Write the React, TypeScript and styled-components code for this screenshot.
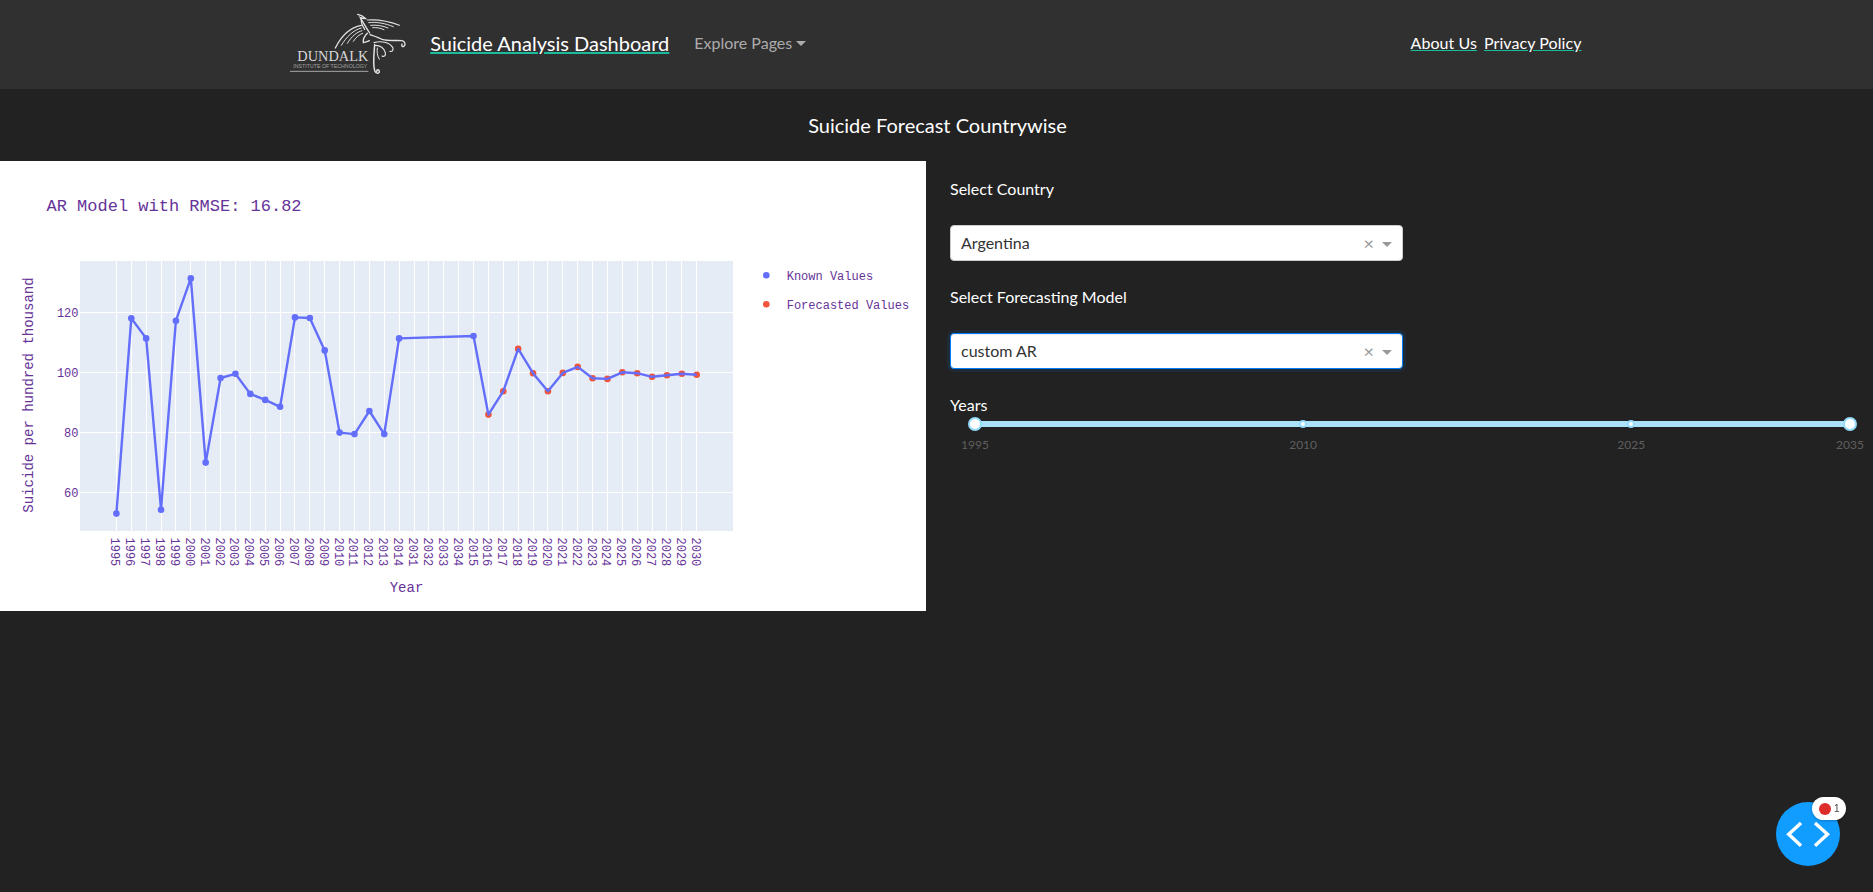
import styled, { createGlobalStyle } from "styled-components";

const GlobalStyle = createGlobalStyle`
  html, body {
    margin: 0;
    padding: 0;
    background: #222222;
    color: #ffffff;
    font-family: Lato, "Open Sans", sans-serif;
    font-size: 16px;
    overflow: hidden;
  }
  * { box-sizing: border-box; }
`;

const PLOT = { left: 80, right: 733, top: 100, bottom: 370 };
const firstTick = 116.4;
const tickStep = 14.88;
const yOf = (v: number) => 151.3 + (120 - v) * 3;
const gridY = (v: number) => yOf(v) + 0.6;
const xOf = (i: number) => firstTick + i * tickStep;

const years = [
  ...Array.from({ length: 20 }, (_, i) => 1995 + i),
  2031, 2032, 2033, 2034,
  ...Array.from({ length: 16 }, (_, i) => 2015 + i),
];

const known: [number, number][] = [
  [0, 52.9], [1, 118], [2, 111.3], [3, 54.2], [4, 117.2], [5, 131.3], [6, 69.9],
  [7, 98.1], [8, 99.5], [9, 92.8], [10, 90.8], [11, 88.5], [12, 118.3], [13, 118.1],
  [14, 107.3], [15, 79.9], [16, 79.4], [17, 87.1], [18, 79.4], [19, 111.3], [24, 112.1],
];

const forecast: [number, number][] = [
  [25, 85.9], [26, 93.7], [27, 107.8], [28, 99.7], [29, 93.7], [30, 99.8], [31, 101.8],
  [32, 98], [33, 97.8], [34, 100], [35, 99.7], [36, 98.5], [37, 99], [38, 99.5], [39, 99.2],
];

const linePoints = [...known, ...forecast]
  .map(([i, v]) => `${xOf(i).toFixed(1)},${yOf(v).toFixed(1)}`)
  .join(" ");

const Logo = () => (
  <LogoSvg viewBox="30 20 350 190">
    <g fill="none" stroke="#e2e2e2" strokeLinecap="round">
      <path strokeWidth="4" d="M233 27c10 2 18 7 24 13-6 0-12-1-16-3 6 10 16 28 28 46" />
      <path strokeWidth="4" d="M244 38c-2 10 2 22 10 34" />
      <path strokeWidth="3.5" d="M262 44c30-2 66 4 96 16" />
      <path strokeWidth="3" d="M266 52c24-3 50 2 74 12" />
      <path strokeWidth="3" d="M272 60c18-2 36 1 52 8" />
      <path strokeWidth="3" d="M278 67c12-1 24 1 34 6" />
      <path strokeWidth="4" d="M244 60c-34 6-60 32-78 68" />
      <path strokeWidth="3" d="M244 68c-24 6-44 26-60 52" />
      <path strokeWidth="3" d="M246 76c-16 4-32 18-44 38" />
      <path strokeWidth="3" d="M248 84c-10 3-20 12-28 24" />
      <path strokeWidth="4" d="M262 84c-8 8-14 18-12 28 6-2 12-2 18-6" />
      <path strokeWidth="4" d="M270 88c12 4 26 8 36 14 22 6 44 2 60 4 10 2 12 14 4 18-4 0-6-4-4-8" />
      <path strokeWidth="3.5" d="M282 112c20-6 46-2 56 14 4 8-2 14-8 12" />
      <path strokeWidth="3.5" d="M286 120c14 0 26 8 30 22 2 8-4 14-10 10" />
      <path strokeWidth="4.5" d="M284 118c-2 30-6 56 0 78 4 10 14 10 14 2-1-6-8-6-8 0" />
      <path strokeWidth="3" d="M292 128c-2 10 0 26 6 34" />
    </g>
    <LogoTitle x="52" y="167" textLength="213" lengthAdjust="spacingAndGlyphs">DUNDALK</LogoTitle>
    <LogoSub x="40" y="189" textLength="222" lengthAdjust="spacingAndGlyphs">INSTITUTE OF TECHNOLOGY</LogoSub>
    <line x1="30" y1="198" x2="265" y2="198" stroke="#a8a8a8" strokeWidth="3" />
  </LogoSvg>
);

const Chart = () => (
  <ChartSvg viewBox="0 0 926 450">
    <rect
      x={PLOT.left}
      y={PLOT.top}
      width={PLOT.right - PLOT.left}
      height={PLOT.bottom - PLOT.top}
      fill="#e5ecf6"
    />
    <g stroke="#ffffff" strokeWidth="1" shapeRendering="crispEdges">
      {years.map((_, i) => (
        <line key={i} x1={xOf(i)} x2={xOf(i)} y1={PLOT.top} y2={PLOT.bottom} />
      ))}
      {[120, 100, 80, 60].map((v) => (
        <line key={v} x1={PLOT.left} x2={PLOT.right} y1={gridY(v)} y2={gridY(v)} />
      ))}
    </g>

    {forecast.map(([i, v]) => (
      <circle key={i} cx={xOf(i)} cy={yOf(v)} r="3.3" fill="#ef553b" />
    ))}
    <polyline points={linePoints} fill="none" stroke="#636efa" strokeWidth="2.4" strokeLinejoin="round" />
    {known.map(([i, v]) => (
      <circle key={i} cx={xOf(i)} cy={yOf(v)} r="3.3" fill="#636efa" />
    ))}

    <ChartTitle x="46.5" y="49.5">AR Model with RMSE: 16.82</ChartTitle>

    {[120, 100, 80, 60].map((v) => (
      <TickText key={v} x="78.5" y={gridY(v) + 4} textAnchor="end">
        {v}
      </TickText>
    ))}
    {years.map((year, i) => (
      <TickText key={i} transform={`translate(${xOf(i) - 5},376.5) rotate(90)`}>
        {year}
      </TickText>
    ))}

    <AxisTitle transform="translate(33,234) rotate(-90)" textAnchor="middle">
      Suicide per hundred thousand
    </AxisTitle>
    <AxisTitle x="406.5" y="430.5" textAnchor="middle">
      Year
    </AxisTitle>

    <circle cx="766.3" cy="114.3" r="3.3" fill="#636efa" />
    <TickText x="786.7" y="118.5">Known Values</TickText>
    <circle cx="766.3" cy="143.3" r="3.3" fill="#ef553b" />
    <TickText x="786.7" y="147.5">Forecasted Values</TickText>
  </ChartSvg>
);

const Dropdown = ({ value, focused }: { value: string; focused?: boolean }) => (
  <SelectBox $focused={focused}>
    <SelectValue>{value}</SelectValue>
    <ClearMark>×</ClearMark>
    <SelectArrow />
  </SelectBox>
);

const sliderMarks = [1995, 2010, 2025, 2035];
const markPercent = (year: number) => ((year - 1995) / 40) * 100;

const App = () => {
  return (
    <Page>
      <GlobalStyle />
      <NavBar>
        <NavInner>
          <Logo />
          <Brand href="#">Suicide Analysis Dashboard</Brand>
          <ExploreToggle>Explore Pages</ExploreToggle>
          <NavLinks>
            <SmallLink href="#">About Us</SmallLink>
            <SmallLink href="#">Privacy Policy</SmallLink>
          </NavLinks>
        </NavInner>
      </NavBar>

      <PageTitle>Suicide Forecast Countrywise</PageTitle>

      <Columns>
        <ChartPanel>
          <Chart />
        </ChartPanel>
        <Controls>
          <FieldLabel>Select Country</FieldLabel>
          <Dropdown value="Argentina" />
          <FieldLabel>Select Forecasting Model</FieldLabel>
          <Dropdown value="custom AR" focused />
          <SliderLabel>Years</SliderLabel>
          <Slider>
            <SliderRail>
              {sliderMarks.map((year) => (
                <SliderMark key={year} $left={markPercent(year)} $end={year === 1995 || year === 2035}>
                  <MarkLabel $end={year === 1995 || year === 2035}>{year}</MarkLabel>
                </SliderMark>
              ))}
            </SliderRail>
          </Slider>
        </Controls>
      </Columns>

      <DebugButton>
        <svg width="64" height="64" viewBox="0 0 64 64" fill="none" stroke="#fff" strokeWidth="3.4">
          <path d="M25 21 12.7 32.3 25 43.7" />
          <path d="M39 21 51.5 32.3 39 43.7" />
        </svg>
        <DebugBadge>
          <BadgeDot />
          <span>1</span>
        </DebugBadge>
      </DebugButton>
    </Page>
  );
};

export default App;

const Page = styled.div`
  min-height: 100vh;
  background: #222222;
`;

const NavBar = styled.nav`
  height: 89px;
  background: #303030;
`;

const NavInner = styled.div`
  width: 1320px;
  height: 100%;
  margin: 0 auto;
  padding: 0 15px 0 13px;
  display: flex;
  align-items: center;
`;

const LogoSvg = styled.svg`
  width: 116.67px;
  height: 63.33px;
  margin: 0 24px 2px 0;
  flex: none;
`;

const LogoTitle = styled.text`
  font-family: "Liberation Serif", serif;
  font-size: 44px;
  fill: #d8d8d8;
`;

const LogoSub = styled.text`
  font-family: "Liberation Sans", sans-serif;
  font-size: 17px;
  fill: #a0a0a0;
`;

const Brand = styled.a`
  color: #ffffff;
  font-size: 20px;
  line-height: 30px;
  margin: 0 24px 3px 0;
  text-decoration: underline;
  text-decoration-color: #1abc9c;
`;

const ExploreToggle = styled.div`
  color: rgba(255, 255, 255, 0.6);
  line-height: 24px;
  margin-bottom: 3px;
  padding-left: 1px;

  &::after {
    content: "";
    display: inline-block;
    margin-left: 4px;
    vertical-align: 3px;
    border-top: 5px solid;
    border-left: 5px solid transparent;
    border-right: 5px solid transparent;
  }
`;

const NavLinks = styled.div`
  margin-left: auto;
  display: flex;
  gap: 7px;
  margin-bottom: 3px;
`;

const SmallLink = styled.a`
  color: #ffffff;
  font-size: 16px;
  line-height: 24px;
  letter-spacing: 0.07px;
  text-decoration: underline;
  text-decoration-color: #1abc9c;
`;

const PageTitle = styled.h4`
  margin: 0;
  height: 72px;
  padding-left: 2px;
  display: flex;
  align-items: center;
  justify-content: center;
  font-size: 20px;
  font-weight: 400;
  color: #ffffff;
`;

const Columns = styled.div`
  display: flex;
  align-items: flex-start;
`;

const ChartPanel = styled.div`
  width: 926px;
  height: 450px;
  background: #ffffff;
  flex: none;
`;

const ChartSvg = styled.svg`
  display: block;
  width: 926px;
  height: 450px;
`;

const ChartTitle = styled.text`
  font-family: "Liberation Mono", monospace;
  font-size: 17px;
  fill: rebeccapurple;
`;

const TickText = styled.text`
  font-family: "Liberation Mono", monospace;
  font-size: 12px;
  fill: rebeccapurple;
`;

const AxisTitle = styled.text`
  font-family: "Liberation Mono", monospace;
  font-size: 14px;
  fill: rebeccapurple;
`;

const Controls = styled.div`
  flex: 1;
  padding: 16px 23px 0 24px;
`;

const FieldLabel = styled.div`
  line-height: 24px;
  margin-bottom: 24px;
  color: #ffffff;
`;

const SelectBox = styled.div<{ $focused?: boolean }>`
  width: 453px;
  height: 36px;
  margin-bottom: 24px;
  padding: 0 10px 0 10px;
  display: flex;
  align-items: center;
  background: #ffffff;
  border: 1px solid ${({ $focused }) => ($focused ? "#007eff" : "#cccccc")};
  border-radius: 4px;
  box-shadow: ${({ $focused }) =>
    $focused ? "inset 0 1px 1px rgba(0,0,0,.075), 0 0 0 3px rgba(0,126,255,.1)" : "none"};
`;

const SelectValue = styled.span`
  flex: 1;
  margin-bottom: 2px;
  color: #333333;
  font-size: 16px;
`;

const ClearMark = styled.span`
  color: #999999;
  font-size: 18px;
  line-height: 1;
  margin-right: 8px;
`;

const SelectArrow = styled.span`
  width: 0;
  height: 0;
  margin-top: 3px;
  border-top: 5px solid #999999;
  border-left: 5px solid transparent;
  border-right: 5px solid transparent;
`;

const SliderLabel = styled.div`
  line-height: 24px;
  color: #ffffff;
`;

const Slider = styled.div`
  padding: 4px 0 0 25px;
`;

const SliderRail = styled.div`
  position: relative;
  height: 6px;
  background: #abe2fb;
  border-radius: 6px;
`;

const SliderMark = styled.span<{ $left: number; $end: boolean }>`
  position: absolute;
  top: 50%;
  left: ${({ $left }) => $left}%;
  width: ${({ $end }) => ($end ? 14 : 8)}px;
  height: ${({ $end }) => ($end ? 14 : 8)}px;
  transform: translate(-50%, -50%);
  background: #ffffff;
  border: ${({ $end }) => ($end ? 2 : 2.5)}px solid #96dbfa;
  border-radius: 50%;
`;

const MarkLabel = styled.span<{ $end: boolean }>`
  position: absolute;
  top: ${({ $end }) => ($end ? 17.5 : 15)}px;
  left: 50%;
  transform: translateX(-50%);
  font-size: 12px;
  line-height: 15px;
  color: #5f5f5f;
`;

const DebugButton = styled.div`
  position: fixed;
  right: 33px;
  bottom: 26px;
  width: 64px;
  height: 64px;
  border-radius: 50%;
  background: #119dff;
`;

const DebugBadge = styled.div`
  position: absolute;
  top: -5px;
  left: 36px;
  width: 34px;
  height: 23px;
  padding-left: 7px;
  display: flex;
  align-items: center;
  gap: 3px;
  background: #ffffff;
  border-radius: 12px;
  color: #444444;
  font-family: "Liberation Sans", sans-serif;
  font-size: 10px;
  box-shadow: 0 1px 3px rgba(0, 0, 0, 0.25);
`;

const BadgeDot = styled.span`
  width: 12px;
  height: 12px;
  border-radius: 50%;
  background: #dc2c2c;
`;
